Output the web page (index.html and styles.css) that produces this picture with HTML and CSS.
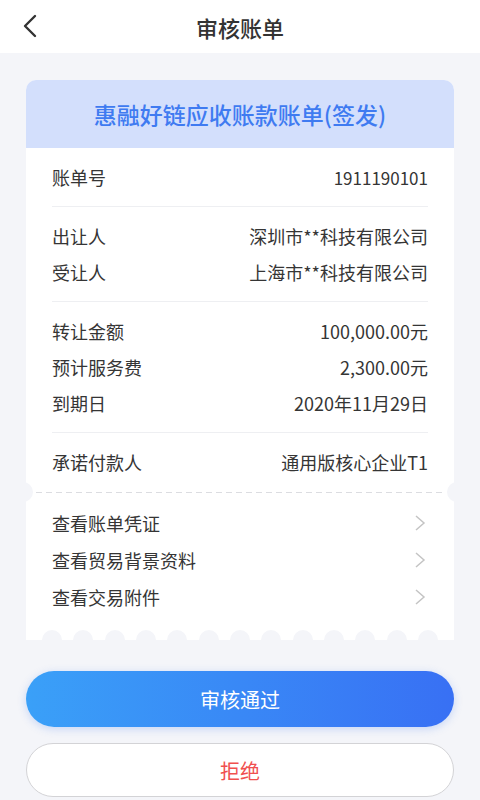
FILE: index.html
```html
<!DOCTYPE html>
<html lang="zh-CN">
<head>
    <meta charset="UTF-8">
    <meta name="viewport" content="width=device-width, initial-scale=1.0">
    <title>审核账单</title>
    <link rel="stylesheet" href="styles.css">
</head>
<body>

    <header class="topbar">
        <a class="back" href="#">
            <svg width="16" height="24" viewBox="0 0 16 24">
                <path d="M13 2 L3 12 L13 22" fill="none" stroke="#333" stroke-width="2.4" stroke-linecap="round" stroke-linejoin="round"/>
            </svg>
        </a>
        <h1>审核账单</h1>
    </header>

    <main class="page">
        <div class="bill-card">
            <div class="bill-head">
                <h2>惠融好链应收账款账单(签发)</h2>
            </div>

            <!-- Bill info -->
            <div class="group">
                <div class="row"><span>账单号</span><span class="num">1911190101</span></div>
            </div>
            <div class="group">
                <div class="row"><span>出让人</span><span>深圳市**科技有限公司</span></div>
                <div class="row"><span>受让人</span><span>上海市**科技有限公司</span></div>
            </div>
            <div class="group">
                <div class="row"><span>转让金额</span><span>100,000.00元</span></div>
                <div class="row"><span>预计服务费</span><span>2,300.00元</span></div>
                <div class="row"><span>到期日</span><span>2020年11月29日</span></div>
            </div>
            <div class="group last">
                <div class="row"><span>承诺付款人</span><span>通用版核心企业T1</span></div>
            </div>

            <div class="tear"><div class="dash"></div></div>

            <!-- Attachments -->
            <div class="links">
                <a class="link" href="#"><span>查看账单凭证</span><svg class="arrow" width="12" height="16" viewBox="0 0 12 16"><path d="M2 1 L10 8 L2 15" fill="none" stroke="#c4c4c4" stroke-width="1.5"/></svg></a>
                <a class="link" href="#"><span>查看贸易背景资料</span><svg class="arrow" width="12" height="16" viewBox="0 0 12 16"><path d="M2 1 L10 8 L2 15" fill="none" stroke="#c4c4c4" stroke-width="1.5"/></svg></a>
                <a class="link" href="#"><span>查看交易附件</span><svg class="arrow" width="12" height="16" viewBox="0 0 12 16"><path d="M2 1 L10 8 L2 15" fill="none" stroke="#c4c4c4" stroke-width="1.5"/></svg></a>
            </div>

            <div class="scallops">
                <span></span><span></span><span></span><span></span><span></span>
                <span></span><span></span><span></span><span></span><span></span>
                <span></span><span></span><span></span>
            </div>
        </div>

        <div class="actions">
            <button type="button" class="btn approve">审核通过</button>
            <button type="button" class="btn reject">拒绝</button>
        </div>
    </main>

</body>
</html>
```

FILE: styles.css
```css
body {
    margin: 0;
    font-family: "Noto Sans CJK SC", "Noto Sans", sans-serif;
    background: #f4f5f9;
    color: #333;
}

.topbar {
    height: 53px;
    background: #fff;
    display: flex;
    align-items: center;
    justify-content: center;
    position: relative;
}

.back {
    position: absolute;
    left: 22px;
    top: 14px;
    display: flex;
}

.topbar h1 {
    margin: 0;
    font-size: 22px;
    font-weight: 500;
    color: #333;
}

.page {
    padding: 27px 26px 0;
}

/* Bill card */
.bill-card {
    background: #fff;
    border-radius: 10px 10px 0 0;
    overflow: hidden;
}

.bill-head {
    height: 68px;
    background: #d3dffc;
    display: flex;
    align-items: center;
    justify-content: center;
}

.bill-head h2 {
    margin: 0;
    font-size: 23px;
    font-weight: 500;
    color: #3f7bf1;
}

.group {
    margin: 0 26px;
    padding: 11px 0;
    border-bottom: 1px solid #eeeff2;
}

.group.last {
    border-bottom: none;
    padding-bottom: 2px;
}

.row {
    height: 36px;
    display: flex;
    align-items: center;
    justify-content: space-between;
    font-size: 18px;
    color: #353535;
}

.num {
    font-size: 17px;
}

/* Dashed tear line with side notches */
.tear {
    height: 20px;
    display: flex;
    align-items: center;
    padding: 0 10px;
    position: relative;
}

.tear::before,
.tear::after {
    content: "";
    position: absolute;
    top: 0;
    width: 20px;
    height: 20px;
    border-radius: 50%;
    background: #f4f5f9;
}

.tear::before {
    left: -13px;
}

.tear::after {
    right: -13px;
}

.dash {
    flex: 1;
    height: 1px;
    background: repeating-linear-gradient(to right, #dcdde1 0 6px, transparent 6px 10px);
}

.links {
    padding: 2px 26px 15px;
}

.link {
    height: 37px;
    display: flex;
    align-items: center;
    justify-content: space-between;
    font-size: 18px;
    color: #353535;
    text-decoration: none;
}

.arrow {
    margin-right: 2px;
}

.scallops {
    height: 10px;
    display: flex;
    justify-content: space-between;
    padding: 0 16px;
}

.scallops span {
    width: 20px;
    height: 10px;
    border-radius: 10px 10px 0 0;
    background: #f4f5f9;
}

/* Buttons */
.actions {
    padding-top: 31px;
    display: flex;
    flex-direction: column;
    gap: 16px;
}

.btn {
    width: 100%;
    border-radius: 28px;
    font-family: inherit;
    font-size: 20px;
    cursor: pointer;
}

.approve {
    height: 56px;
    border: none;
    color: #fff;
    background: linear-gradient(to right, #3aa0f8, #3870f4);
    box-shadow: 0 2px 8px rgba(60, 120, 240, 0.25);
}

.reject {
    height: 54px;
    border: 1px solid #d3d3d6;
    background: #fff;
    color: #f0504f;
}
```
